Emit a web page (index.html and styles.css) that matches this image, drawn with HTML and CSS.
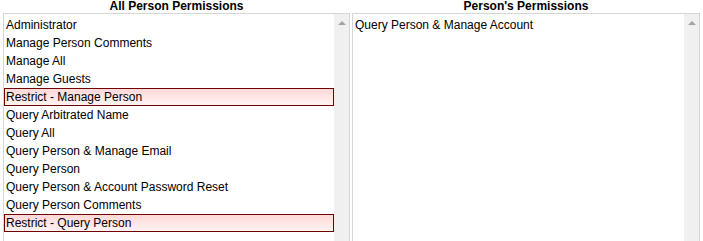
FILE: index.html
```html
<!DOCTYPE html>
<html lang="en">

<head>
    <meta charset="UTF-8">
    <title>Permissions</title>
    <link rel="stylesheet" href="styles.css">
</head>

<body>
    <div class="wrap">
        <div class="col">
            <div class="title">All Person Permissions</div>
            <div class="list">
                <div class="items">
                    <div class="item">Administrator</div>
                    <div class="item">Manage Person Comments</div>
                    <div class="item">Manage All</div>
                    <div class="item">Manage Guests</div>
                    <div class="item restrict">Restrict - Manage Person</div>
                    <div class="item">Query Arbitrated Name</div>
                    <div class="item">Query All</div>
                    <div class="item">Query Person &amp; Manage Email</div>
                    <div class="item">Query Person</div>
                    <div class="item">Query Person &amp; Account Password Reset</div>
                    <div class="item">Query Person Comments</div>
                    <div class="item restrict">Restrict - Query Person</div>
                </div>
                <div class="bar"><span class="arrow"></span></div>
            </div>
        </div>
        <div class="col">
            <div class="title">Person's Permissions</div>
            <div class="list">
                <div class="items">
                    <div class="item">Query Person &amp; Manage Account</div>
                </div>
                <div class="bar"><span class="arrow"></span></div>
            </div>
        </div>
    </div>
</body>

</html>
```

FILE: styles.css
```css
* {
    margin: 0;
    padding: 0;
    box-sizing: border-box;
}

body {
    font-family: "Liberation Sans", Arial, sans-serif;
    font-size: 12px;
    color: #000;
    background: #fff;
}

.wrap {
    display: grid;
    grid-template-columns: 347px 348px;
    column-gap: 2px;
    padding: 0 3px;
}

.title {
    height: 13px;
    line-height: 13px;
    text-align: center;
    font-weight: bold;
}

.list {
    display: flex;
    height: 240px;
    border: 1px solid #d6d6d6;
}

.items {
    flex: 1;
    padding-top: 2px;
}

.item {
    height: 18px;
    line-height: 16px;
    padding-left: 1px;
    border: 1px solid transparent;
    white-space: nowrap;
}

.restrict {
    border-color: #700000;
    background: linear-gradient(#ffd8d8, #fff3f3);
}

.bar {
    width: 15px;
    background-color: #f0f0f0;
    display: flex;
    justify-content: center;
    padding-top: 7px;
}

.arrow {
    width: 0;
    height: 0;
    border-left: 4px solid transparent;
    border-right: 4px solid transparent;
    border-bottom: 4px solid #a3a3a3;
}
```
